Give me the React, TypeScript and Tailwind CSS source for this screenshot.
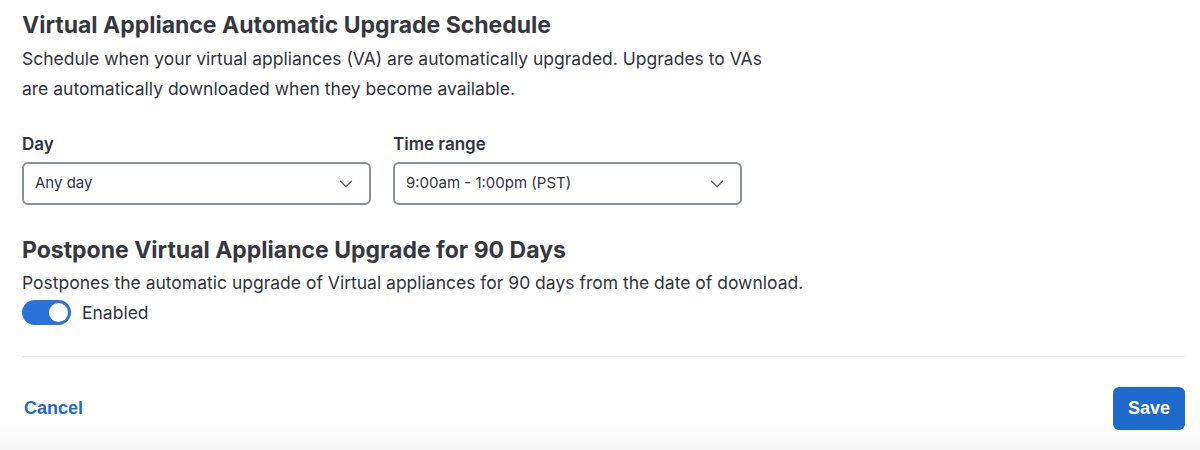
import { ChevronDown } from "lucide-react";

const font = { fontFamily: "Inter, 'Noto Sans', sans-serif" };

function Select({ value }: { value: string }) {
  return (
    <div className="flex h-[43px] w-[349px] items-center justify-between rounded-[6px] border-2 border-[#8b9098] bg-white pl-[11px] pr-[12px] text-[15px] text-[#30333a]">
      <span>{value}</span>
      <ChevronDown className="h-[22px] w-[22px] text-[#5b6068]" strokeWidth={1.5} />
    </div>
  );
}

export default function App() {
  return (
    <div className="flex h-[450px] w-[1200px] flex-col bg-white text-[#30333a]" style={font}>
      <div className="flex flex-col pl-[22px] pr-[15px] pt-[10px]">
        <h1 className="text-[23px] font-bold leading-[30px] text-[#35383e]">
          Virtual Appliance Automatic Upgrade Schedule
        </h1>
        <p className="mt-[4px] max-w-[750px] text-[17.5px] leading-[30px]">
          Schedule when your virtual appliances (VA) are automatically upgraded. Upgrades to VAs
          are automatically downloaded when they become available.
        </p>

        <div className="mt-[30px] flex gap-[22px]">
          <div className="flex flex-col gap-[8px]">
            <label className="text-[17px] font-semibold leading-[20px]">Day</label>
            <Select value="Any day" />
          </div>
          <div className="flex flex-col gap-[8px]">
            <label className="text-[17px] font-semibold leading-[20px]">Time range</label>
            <Select value="9:00am - 1:00pm (PST)" />
          </div>
        </div>

        <h2 className="mt-[30px] text-[23px] font-bold leading-[30px] text-[#35383e]">
          Postpone Virtual Appliance Upgrade for 90 Days
        </h2>
        <p className="mt-[3px] text-[17.5px] leading-[30px]">
          Postpones the automatic upgrade of Virtual appliances for 90 days from the date of download.
        </p>
        <div className="mt-[2px] flex items-center gap-[11px]">
          <div className="flex h-[25px] w-[49px] items-center justify-end rounded-full bg-[#2a72d9] px-[3px]">
            <div className="h-[19px] w-[19px] rounded-full bg-white" />
          </div>
          <span className="text-[17.5px] leading-[24px]">Enabled</span>
        </div>

        <div className="mt-[31px] h-px w-full bg-[#e3e4e6]" />
      </div>

      <div
        className="flex flex-1 items-start justify-between bg-gradient-to-b from-white from-70% to-[#f5f5f5] px-[15px] pt-[30px]"
        style={{ fontFamily: "'Liberation Sans', Arial, sans-serif" }}
      >
        <button className="flex h-[43px] items-center px-[9px] text-[18px] font-bold text-[#1d69cc]">
          Cancel
        </button>
        <button className="h-[43px] w-[72px] rounded-[6px] bg-[#1d69cc] text-[18px] font-bold text-white">
          Save
        </button>
      </div>
    </div>
  );
}
